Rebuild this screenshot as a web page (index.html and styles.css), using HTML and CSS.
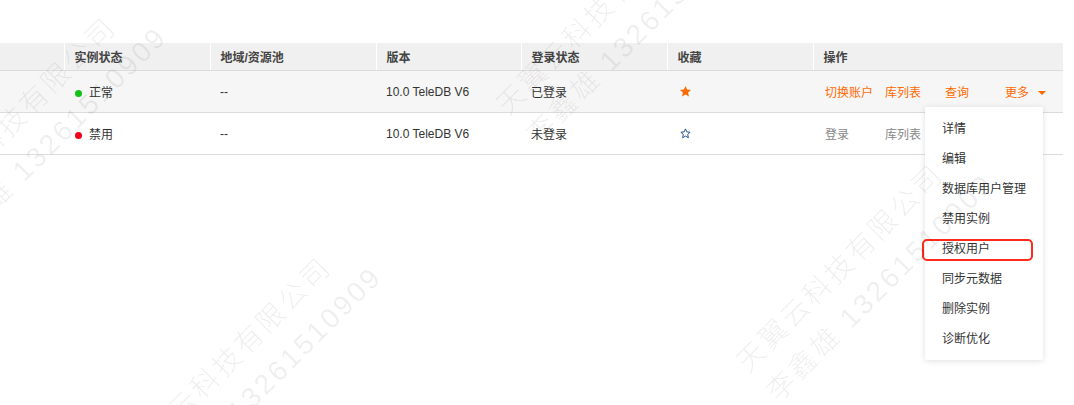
FILE: index.html
```html
<!DOCTYPE html>
<html lang="zh-CN">
<head>
    <meta charset="UTF-8">
    <meta name="viewport" content="width=device-width, initial-scale=1.0">
    <title>实例列表</title>
    <link rel="stylesheet" href="styles.css">
</head>
<body>
    <div class="page">
        <table class="grid">
            <colgroup>
                <col class="c-check">
                <col class="c-status">
                <col class="c-region">
                <col class="c-version">
                <col class="c-login">
                <col class="c-fav">
                <col class="c-ops">
            </colgroup>
            <thead>
                <tr>
                    <th></th>
                    <th>实例状态</th>
                    <th>地域/资源池</th>
                    <th>版本</th>
                    <th>登录状态</th>
                    <th>收藏</th>
                    <th>操作</th>
                </tr>
            </thead>
            <tbody>
                <tr class="hover">
                    <td></td>
                    <td><span class="dot dot-ok"></span>正常</td>
                    <td>--</td>
                    <td>10.0 TeleDB V6</td>
                    <td>已登录</td>
                    <td>
                        <svg class="star" viewBox="0 0 24 24"><path class="star-on" d="M12 1.8l3 6.6 7.1.8-5.3 4.8 1.5 7.1L12 17.5l-6.3 3.6 1.5-7.1L1.9 9.2 9 8.4z"/></svg>
                    </td>
                    <td class="ops">
                        <a class="op">切换账户</a><a class="op">库列表</a><a class="op">查询</a><a class="op more">更多<span class="caret"></span></a>
                    </td>
                </tr>
                <tr>
                    <td></td>
                    <td><span class="dot dot-off"></span>禁用</td>
                    <td>--</td>
                    <td>10.0 TeleDB V6</td>
                    <td>未登录</td>
                    <td>
                        <svg class="star" viewBox="0 0 24 24"><path class="star-off" d="M12 3.5l2.5 5.5 6 .7-4.5 4.1 1.3 6L12 16.8l-5.3 3 1.3-6-4.5-4.1 6-.7z"/></svg>
                    </td>
                    <td class="ops">
                        <a class="op op-muted">登录</a><a class="op op-muted">库列表</a>
                    </td>
                </tr>
            </tbody>
        </table>

        <ul class="dropdown">
            <li>详情</li>
            <li>编辑</li>
            <li>数据库用户管理</li>
            <li>禁用实例</li>
            <li class="flagged">授权用户</li>
            <li>同步元数据</li>
            <li>删除实例</li>
            <li>诊断优化</li>
        </ul>

        <div class="watermark">
            <div class="wm wm-a"><div>天翼云科技有限公司</div><div>李鑫雄 13261510909</div></div>
            <div class="wm wm-b"><div>天翼云科技有限公司</div><div>李鑫雄 13261510909</div></div>
            <div class="wm wm-c"><div>天翼云科技有限公司</div><div>李鑫雄 13261510909</div></div>
            <div class="wm wm-d"><div>天翼云科技有限公司</div><div>李鑫雄 13261510909</div></div>
        </div>
    </div>
</body>
</html>
```

FILE: styles.css
```css
body {
    margin: 0;
    font-family: "Liberation Sans", "Noto Sans CJK SC", sans-serif;
    font-size: 12px;
    color: #333;
    background-color: #fff;
}

.page {
    position: relative;
    height: 405px;
    padding-top: 43px;
    box-sizing: border-box;
    overflow: hidden;
}

/* table */
.grid {
    width: 1063px;
    border-collapse: collapse;
    table-layout: fixed;
}

.c-check { width: 64px; }
.c-status { width: 146px; }
.c-region { width: 166px; }
.c-version { width: 145px; }
.c-login { width: 146px; }
.c-fav { width: 146px; }
.c-ops { width: 250px; }

.grid th {
    height: 27px;
    padding: 0 10px;
    text-align: left;
    font-weight: bold;
    color: #444;
    background-color: #f0f0f0;
    border-left: 1px solid #fff;
    border-bottom: 1px solid #dcdcdc;
}

.grid th:first-child {
    border-left: none;
}

.grid td {
    height: 41px;
    padding: 0 10px;
    border-bottom: 1px solid #dcdcdc;
    white-space: nowrap;
}

.grid td.ops {
    padding-left: 12px;
}

.grid tr.hover td {
    background-color: #f6f6f6;
}

.dot {
    display: inline-block;
    width: 7px;
    height: 7px;
    border-radius: 50%;
    margin: 0 7px 0 1px;
    vertical-align: 0;
}

.dot-ok { background-color: #16c016; }
.dot-off { background-color: #f0001a; }

.star {
    width: 13px;
    height: 13px;
    margin-left: 2px;
    vertical-align: -2px;
}

.star-on { fill: #ff6a00; }
.star-off { fill: none; stroke: #1f4f86; stroke-width: 1.8; stroke-linejoin: round; }

.op {
    display: inline-block;
    width: 60px;
    color: #ff6a00;
    cursor: pointer;
}

.op-muted {
    color: #888;
}

.caret {
    display: inline-block;
    margin-left: 9px;
    border-left: 4px solid transparent;
    border-right: 4px solid transparent;
    border-top: 4px solid #ff6a00;
    vertical-align: 2px;
}

/* more menu */
.dropdown {
    position: absolute;
    left: 925px;
    top: 107px;
    width: 118px;
    margin: 0;
    padding: 7px 0 6px;
    list-style: none;
    background-color: #fff;
    border-radius: 2px;
    box-shadow: 0 1px 6px rgba(0, 0, 0, 0.13);
    z-index: 5;
}

.dropdown li {
    position: relative;
    height: 30px;
    line-height: 30px;
    padding-left: 17px;
    color: #333;
}

.dropdown li.flagged::after {
    content: "";
    position: absolute;
    left: -3px;
    right: 10px;
    top: 5px;
    bottom: 3px;
    border: 2px solid #ff2a1a;
    border-radius: 5px;
}

/* watermark */
.watermark {
    position: absolute;
    left: 0;
    top: 0;
    right: 0;
    bottom: 0;
    pointer-events: none;
    overflow: hidden;
    z-index: 10;
}

.wm {
    position: absolute;
    transform-origin: 0 0;
    transform: rotate(-45deg);
    font-size: 28px;
    line-height: 42px;
    letter-spacing: 3px;
    white-space: nowrap;
    color: rgba(0, 0, 0, 0.08);
    font-weight: 300;
}

.wm-a { left: 115px; top: 445px; }
.wm-b { left: 727px; top: 352px; }
.wm-c { left: 487px; top: 95px; }
.wm-d { left: -100px; top: 205px; }
```
